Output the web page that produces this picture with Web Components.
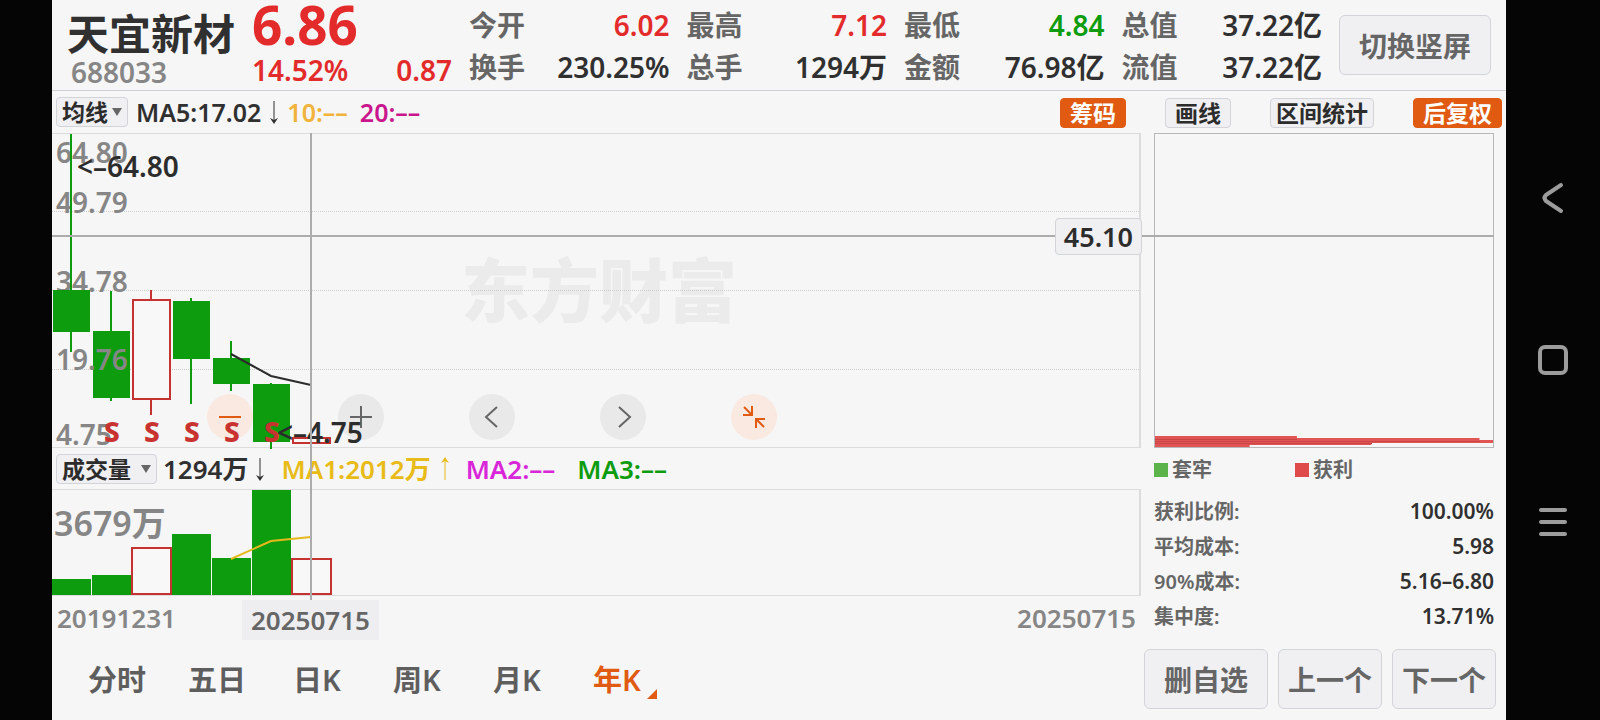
<!DOCTYPE html>
<html lang="zh-CN">

<head>
    <meta charset="UTF-8">
    <meta name="viewport" content="width=device-width, initial-scale=1">
    <title>天宜新材 688033</title>
    <style>
        body {
            margin: 0;
            background: #050505;
            color: #303030;
            font: 600 28px "Noto Sans", "Noto Sans CJK SC", sans-serif;
            --page: #f6f6f6;
            --label: #666;
            --muted: #868686;
            --red: #e32b2b;
            --green: #0d9c0d;
            --accent: #e05a12;
            --button: #f0f0f3;
            --edge: #d3d4da;
            --rule: #dcdcdc;
            --cross: #acacac;
        }
    </style>
</head>

<body>
    <stock-app></stock-app>
</body>

<script>
    // attach an open shadow root with the given markup
    class BaseElement extends HTMLElement {
        constructor() {
            super();
            const template = document.createElement('template');
            template.innerHTML = this.render();
            this.attachShadow({ mode: 'open' }).appendChild(template.content.cloneNode(true));
        }
    }

    class QuoteCell extends BaseElement {
        render() {
            return `
            <style>
                :host {
                    display: flex;
                    justify-content: space-between;
                    line-height: 42px;
                    white-space: nowrap;
                }
                .label { color: var(--label); }
            </style>
            <span class="label"><slot name="label"></slot></span>
            <span><slot></slot></span>`;
        }
    }

    // button in the app's four looks: big, small, active, tight
    class PushButton extends BaseElement {
        render() {
            return `
            <style>
                :host { display: block; }
                button {
                    width: 100%;
                    height: 30px;
                    padding: 0 9px;
                    border: 1px solid var(--edge);
                    border-radius: 4px;
                    background: var(--button);
                    color: #2c2c2c;
                    font: inherit;
                    font-size: 23px;
                    line-height: 28px;
                    white-space: nowrap;
                }
                :host([tight]) button { padding: 0 5px; }
                :host([active]) button {
                    border-color: var(--accent);
                    background: var(--accent);
                    color: #fff;
                }
                :host([big]) button {
                    height: 60px;
                    border-radius: 6px;
                    color: var(--label);
                    font-size: 28px;
                    line-height: 60px;
                }
            </style>
            <button type="button"><slot></slot></button>`;
        }
    }

    class IndicatorSelect extends BaseElement {
        render() {
            const name = this.getAttribute('name');
            return `
            <style>
                :host { display: grid; align-items: center; }
                select, svg { grid-area: 1 / 1; }
                select {
                    appearance: none;
                    box-sizing: border-box;
                    width: 100%;
                    height: 30px;
                    padding: 0 0 0 5px;
                    border: 1px solid var(--edge);
                    border-radius: 4px;
                    background: var(--button);
                    color: #2c2c2c;
                    font: inherit;
                    font-size: 23px;
                    line-height: 28px;
                }
                svg { justify-self: end; margin-right: 6px; pointer-events: none; }
            </style>
            <select aria-label="指标"><option>${name}</option></select>
            <svg width="10" height="8"><path d="M0 0H10L5 8Z" fill="#666"/></svg>`;
        }
    }

    class TrendArrow extends BaseElement {
        render() {
            const flip = this.hasAttribute('up') ? 'rotate(180 5 12)' : '';
            return `
            <style>
                :host { display: block; }
                svg { display: block; }
            </style>
            <svg width="10" height="24">
                <g transform="${flip}">
                    <path d="M5 1V21" stroke="currentColor" stroke-width="1"/>
                    <path d="M1 18L5 20L9 18L5 24Z" fill="currentColor"/>
                </g>
            </svg>`;
        }
    }

    class QuoteHeader extends BaseElement {
        render() {
            return `
            <style>
                :host {
                    display: flex;
                    gap: 17px;
                    height: 90px;
                    padding: 0 15px;
                    border-bottom: 1px solid #cfd0d6;
                }
                h1 {
                    margin: 9px 0 0;
                    font-size: 42px;
                    font-weight: 700;
                    line-height: 50px;
                    white-space: nowrap;
                }
                .code { padding-left: 4px; color: var(--muted); line-height: 26px; }
                .price { width: 200px; color: var(--red); }
                .last { font-size: 53px; font-weight: 700; line-height: 50px; }
                .change { display: flex; justify-content: space-between; line-height: 40px; }
                .cells {
                    flex: 1;
                    display: grid;
                    grid-template-columns: repeat(4, 1fr);
                    column-gap: 17px;
                    align-content: start;
                    padding-top: 4px;
                }
                .up { color: var(--red); }
                .down { color: var(--green); }
                push-button { width: 152px; padding-top: 15px; }
            </style>
            <div>
                <h1>天宜新材</h1>
                <div class="code">688033</div>
            </div>
            <div class="price">
                <div class="last">6.86</div>
                <div class="change"><span>14.52%</span><span>0.87</span></div>
            </div>
            <div class="cells">
                <quote-cell class="up"><span slot="label">今开</span>6.02</quote-cell>
                <quote-cell class="up"><span slot="label">最高</span>7.12</quote-cell>
                <quote-cell class="down"><span slot="label">最低</span>4.84</quote-cell>
                <quote-cell><span slot="label">总值</span>37.22亿</quote-cell>
                <quote-cell><span slot="label">换手</span>230.25%</quote-cell>
                <quote-cell><span slot="label">总手</span>1294万</quote-cell>
                <quote-cell><span slot="label">金额</span>76.98亿</quote-cell>
                <quote-cell><span slot="label">流值</span>37.22亿</quote-cell>
            </div>
            <push-button big>切换竖屏</push-button>`;
        }
    }

    class ChartToolbar extends BaseElement {
        render() {
            return `
            <style>
                :host {
                    display: flex;
                    align-items: center;
                    height: 42px;
                    padding: 0 4px;
                    font-size: 25px;
                    white-space: nowrap;
                }
                indicator-select { width: 72px; margin-right: 8px; }
                .lines { display: flex; align-items: center; gap: 8px; line-height: 28px; }
                .lines span + span { margin-left: 4px; }
                .tools { display: flex; gap: 39px; margin-left: auto; }
            </style>
            <indicator-select name="均线"></indicator-select>
            <div class="lines">
                <span>MA5:17.02</span>
                <trend-arrow></trend-arrow>
                <span style="color: #f0b43c">10:––</span>
                <span style="color: #c9168c">20:––</span>
            </div>
            <div class="tools">
                <push-button active>筹码</push-button>
                <push-button>画线</push-button>
                <push-button tight>区间统计</push-button>
                <push-button active>后复权</push-button>
            </div>`;
        }
    }

    class ZoomControls extends BaseElement {
        render() {
            return `
            <style>
                :host { display: flex; gap: 85px; }
                button {
                    width: 46px;
                    height: 46px;
                    padding: 0;
                    border: 0;
                    border-radius: 50%;
                    background: #e9e9e9;
                    color: #666;
                }
                .warm { background: #f9e9e1; color: var(--accent); }
                svg { display: block; fill: none; stroke: currentColor; stroke-width: 2; }
            </style>
            <button class="warm" aria-label="缩小"><svg width="46" height="46"><path d="M12 23H34"/></svg></button>
            <button aria-label="放大"><svg width="46" height="46"><path d="M12 23H34M23 12V34"/></svg></button>
            <button aria-label="左移"><svg width="46" height="46"><path d="M28 13L17 23L28 33"/></svg></button>
            <button aria-label="右移"><svg width="46" height="46"><path d="M19 13L30 23L19 33"/></svg></button>
            <button class="warm" aria-label="收起"><svg width="46" height="46"><path d="M12 21H21V12M13 13L21 21M25 34V25H34M25 25L33 33"/></svg></button>`;
        }
    }

    const STEP = 40;

    class KlineChart extends BaseElement {
        render() {
            // body top, body bottom, wick top, wick bottom
            const candles = [
                [156, 198, 0, 218],
                [197, 264, 157, 267],
                [166, 265, 156, 281, 'up'],
                [167, 225, 164, 270],
                [224, 250, 207, 257],
                [250, 308, 249, 315],
                [304, 309, 304, 314, 'up']
            ];
            const bodies = candles.map(([top, bottom, high, low, up], i) => {
                const x = i * STEP;
                return up
                    ? `<g stroke="#c43232" stroke-width="2"><rect x="${x + 1}" y="${top}" width="37" height="${bottom - top}" fill="#f8f8f8"/>
                       <path d="M${x + 19} ${high}V${top}M${x + 19} ${bottom}V${low}"/></g>`
                    : `<path d="M${x + 19} ${high}V${low}" stroke="#0d9c0d" stroke-width="2"/>
                       <rect x="${x + 1}" y="${top}" width="37" height="${bottom - top}" fill="#0d9c0d"/>`;
            }).join('');
            const sells = [1, 2, 3, 4, 5].map(i => `<text class="sell" x="${i * STEP + 20}" y="308">S</text>`).join('');
            return `
            <style>
                :host {
                    display: block;
                    position: relative;
                    border: solid var(--rule);
                    border-width: 1px 2px 1px 0;
                }
                svg { display: block; position: relative; overflow: visible; pointer-events: none; }
                zoom-controls { position: absolute; left: 155px; bottom: 7px; }
                .grid line { stroke: #cdcdcd; stroke-dasharray: 1 1; }
                .axis { fill: var(--muted); }
                .mark { fill: #2c2c2c; }
                .sell { fill: #c8322f; font-weight: 800; text-anchor: middle; }
                .logo { fill: #ebebeb; font-size: 69px; font-weight: 900; }
            </style>
            <zoom-controls></zoom-controls>
            <svg width="100%" height="313">
                <text class="logo" x="409" y="183">东方财富</text>
                <g class="grid">
                    <line x1="0" x2="100%" y1="77.5" y2="77.5"/>
                    <line x1="0" x2="100%" y1="156.5" y2="156.5"/>
                    <line x1="0" x2="100%" y1="235.5" y2="235.5"/>
                </g>
                <g class="axis">
                    <text x="4" y="29">64.80</text>
                    <text x="4" y="79">49.79</text>
                    <text x="4" y="158">34.78</text>
                </g>
                ${bodies}
                <g class="axis">
                    <text x="4" y="236">19.76</text>
                    <text x="4" y="311">4.75</text>
                </g>
                <path d="M179 220L219 242L259 251" fill="none" stroke="#2c2c2c" stroke-width="2"/>
                ${sells}
                <text class="mark" x="25" y="43">&lt;–64.80</text>
                <text class="mark" x="225" y="309">&lt;–4.75</text>
            </svg>`;
        }
    }

    class VolumeBar extends BaseElement {
        render() {
            return `
            <style>
                :host {
                    display: flex;
                    align-items: center;
                    gap: 6px;
                    height: 41px;
                    padding-left: 4px;
                    font-size: 26px;
                    line-height: 30px;
                    white-space: nowrap;
                }
                indicator-select { width: 101px; }
                .ma { display: flex; gap: 22px; padding-left: 11px; }
                .ma1 { display: flex; align-items: center; gap: 9px; margin-right: -6px; color: #e8bb18; }
            </style>
            <indicator-select name="成交量"></indicator-select>
            <span>1294万</span>
            <trend-arrow></trend-arrow>
            <div class="ma">
                <span class="ma1">MA1:2012万 <trend-arrow up></trend-arrow></span>
                <span style="color: #d926d9">MA2:––</span>
                <span style="color: #0d9c0d">MA3:––</span>
            </div>`;
        }
    }

    class VolumeChart extends BaseElement {
        render() {
            const tops = [89, 85, 58, 44, 68, 0, 69];
            const bars = tops.map((top, i) => {
                const up = i === 2 || i === 6;
                return up
                    ? `<rect x="${i * STEP}" y="${top}" width="39" height="${104 - top}" fill="#f8f8f8" stroke="#c43232" stroke-width="2"/>`
                    : `<rect x="${i * STEP}" y="${top}" width="39" height="${105 - top}" fill="#0d9c0d"/>`;
            }).join('');
            return `
            <style>
                :host { display: block; border: solid var(--rule); border-width: 1px 2px 1px 0; }
                svg { display: block; }
                text { fill: var(--muted); font-size: 34px; }
            </style>
            <svg width="100%" height="105">
                ${bars}
                <path d="M179 69L219 51L259 47" fill="none" stroke="#e6b81c" stroke-width="2"/>
                <text x="2" y="46">3679万</text>
            </svg>`;
        }
    }

    class DateAxis extends BaseElement {
        render() {
            return `
            <style>
                :host {
                    display: flex;
                    justify-content: space-between;
                    position: relative;
                    height: 43px;
                    padding: 0 5px;
                    color: var(--muted);
                    font-size: 26px;
                    line-height: 44px;
                }
                .cursor {
                    position: absolute;
                    left: 190px;
                    top: 4px;
                    padding: 0 9px;
                    background: #eeeef1;
                    color: var(--label);
                    line-height: 40px;
                }
            </style>
            <span>20191231</span>
            <span class="cursor">20250715</span>
            <span>20250715</span>`;
        }
    }

    class ChipPanel extends BaseElement {
        render() {
            return `
            <style>
                :host { display: block; font-size: 20px; }
                .chips { display: block; box-sizing: border-box; border: 1px solid #b8b8b8; }
                .legend { display: grid; grid-template-columns: 141px 1fr; line-height: 44px; color: var(--label); }
                .legend span { display: flex; align-items: center; gap: 4px; }
                .legend i { width: 14px; height: 14px; background: #5cb34a; }
                .legend .win { background: #df4b4b; }
                dl { margin: 0; padding-top: 2px; }
                div { display: flex; justify-content: space-between; line-height: 35px; }
                dt { color: var(--label); }
                dd { margin: 0; font-size: 21px; }
            </style>
            <svg class="chips" width="100%" height="315">
                <g fill="#e25555">
                    <rect y="302" width="42%" height="3"/>
                    <rect y="304" width="96%" height="3"/>
                    <rect y="306" width="100%" height="3"/>
                    <rect y="308" width="64%" height="3"/>
                    <rect y="310" width="28%" height="3"/>
                </g>
                <path d="M0 305.5H142M0 307.5H325M0 309.5H217" stroke="#c94444"/>
            </svg>
            <div class="legend">
                <span><i></i>套牢</span>
                <span><i class="win"></i>获利</span>
            </div>
            <dl>
                <div><dt>获利比例:</dt><dd>100.00%</dd></div>
                <div><dt>平均成本:</dt><dd>5.98</dd></div>
                <div><dt>90%成本:</dt><dd>5.16–6.80</dd></div>
                <div><dt>集中度:</dt><dd>13.71%</dd></div>
            </dl>`;
        }
    }

    class ChartBoard extends BaseElement {
        render() {
            return `
            <style>
                :host {
                    display: grid;
                    grid-template-columns: 1fr 340px;
                    gap: 13px;
                    position: relative;
                    padding-right: 12px;
                }
                .cross {
                    position: absolute;
                    inset: 0 12px auto 0;
                    pointer-events: none;
                }
                .cross svg { display: block; }
                .cross line { stroke: var(--cross); stroke-width: 2; }
                .tag {
                    position: absolute;
                    right: 352px;
                    top: 85px;
                    padding: 0 8px;
                    border: 1px solid var(--edge);
                    border-radius: 4px;
                    background: var(--button);
                    color: #2c2c2c;
                    font-size: 27px;
                    line-height: 35px;
                }
            </style>
            <div>
                <kline-chart></kline-chart>
                <volume-bar></volume-bar>
                <volume-chart></volume-chart>
                <date-axis></date-axis>
            </div>
            <chip-panel></chip-panel>
            <div class="cross">
                <svg width="100%" height="467">
                    <line x1="0" x2="100%" y1="103" y2="103"/>
                    <line x1="259" x2="259" y1="0" y2="467"/>
                </svg>
                <span class="tag">45.10</span>
            </div>`;
        }
    }

    class PeriodBar extends BaseElement {
        render() {
            return `
            <style>
                :host {
                    display: flex;
                    justify-content: space-between;
                    align-items: center;
                    padding: 10px 10px 10px 15px;
                }
                nav, .actions { display: flex; }
                .actions { gap: 10px; }
                .actions push-button { width: 104px; }
                .actions push-button:first-child { width: 124px; }
                .tab {
                    position: relative;
                    width: 100px;
                    height: 60px;
                    padding: 0;
                    border: 0;
                    background: none;
                    color: #5e5e5e;
                    font: inherit;
                    font-size: 29px;
                    line-height: 62px;
                }
                .tab.on { color: var(--accent); }
                .tab svg { position: absolute; right: 10px; bottom: 10px; fill: currentColor; }
            </style>
            <nav>
                <button class="tab">分时</button>
                <button class="tab">五日</button>
                <button class="tab">日K</button>
                <button class="tab">周K</button>
                <button class="tab">月K</button>
                <button class="tab on">年K<svg width="10" height="10"><path d="M10 0V10H0Z"/></svg></button>
            </nav>
            <div class="actions">
                <push-button big tight>删自选</push-button>
                <push-button big tight>上一个</push-button>
                <push-button big tight>下一个</push-button>
            </div>`;
        }
    }

    class SystemNav extends BaseElement {
        render() {
            return `
            <style>
                :host {
                    display: flex;
                    flex-direction: column;
                    align-items: center;
                    justify-content: center;
                    gap: 126px;
                    background: #050505;
                }
                button { padding: 0; border: 0; background: none; color: #9c9c9c; }
                svg { display: block; fill: none; stroke: currentColor; stroke-width: 4; stroke-linecap: round; stroke-linejoin: round; }
            </style>
            <button aria-label="返回"><svg width="36" height="36"><path d="M26 5L11 15Q8 18 11 21L26 31"/></svg></button>
            <button aria-label="主页"><svg width="36" height="36"><rect x="5" y="5" width="26" height="26" rx="5"/></svg></button>
            <button aria-label="最近任务"><svg width="36" height="36"><path d="M6 6H30M6 18H30M6 30H30"/></svg></button>`;
        }
    }

    class StockApp extends BaseElement {
        render() {
            return `
            <style>
                :host {
                    display: grid;
                    grid-template-columns: 52px 1fr 94px;
                    min-height: 100vh;
                }
                main { grid-column: 2; background: var(--page); }
            </style>
            <main>
                <quote-header></quote-header>
                <chart-toolbar></chart-toolbar>
                <chart-board></chart-board>
                <period-bar></period-bar>
            </main>
            <system-nav></system-nav>`;
        }
    }

    customElements.define('quote-cell', QuoteCell);
    customElements.define('push-button', PushButton);
    customElements.define('indicator-select', IndicatorSelect);
    customElements.define('trend-arrow', TrendArrow);
    customElements.define('quote-header', QuoteHeader);
    customElements.define('chart-toolbar', ChartToolbar);
    customElements.define('zoom-controls', ZoomControls);
    customElements.define('kline-chart', KlineChart);
    customElements.define('volume-bar', VolumeBar);
    customElements.define('volume-chart', VolumeChart);
    customElements.define('date-axis', DateAxis);
    customElements.define('chip-panel', ChipPanel);
    customElements.define('chart-board', ChartBoard);
    customElements.define('period-bar', PeriodBar);
    customElements.define('system-nav', SystemNav);
    customElements.define('stock-app', StockApp);
</script>

</html>
